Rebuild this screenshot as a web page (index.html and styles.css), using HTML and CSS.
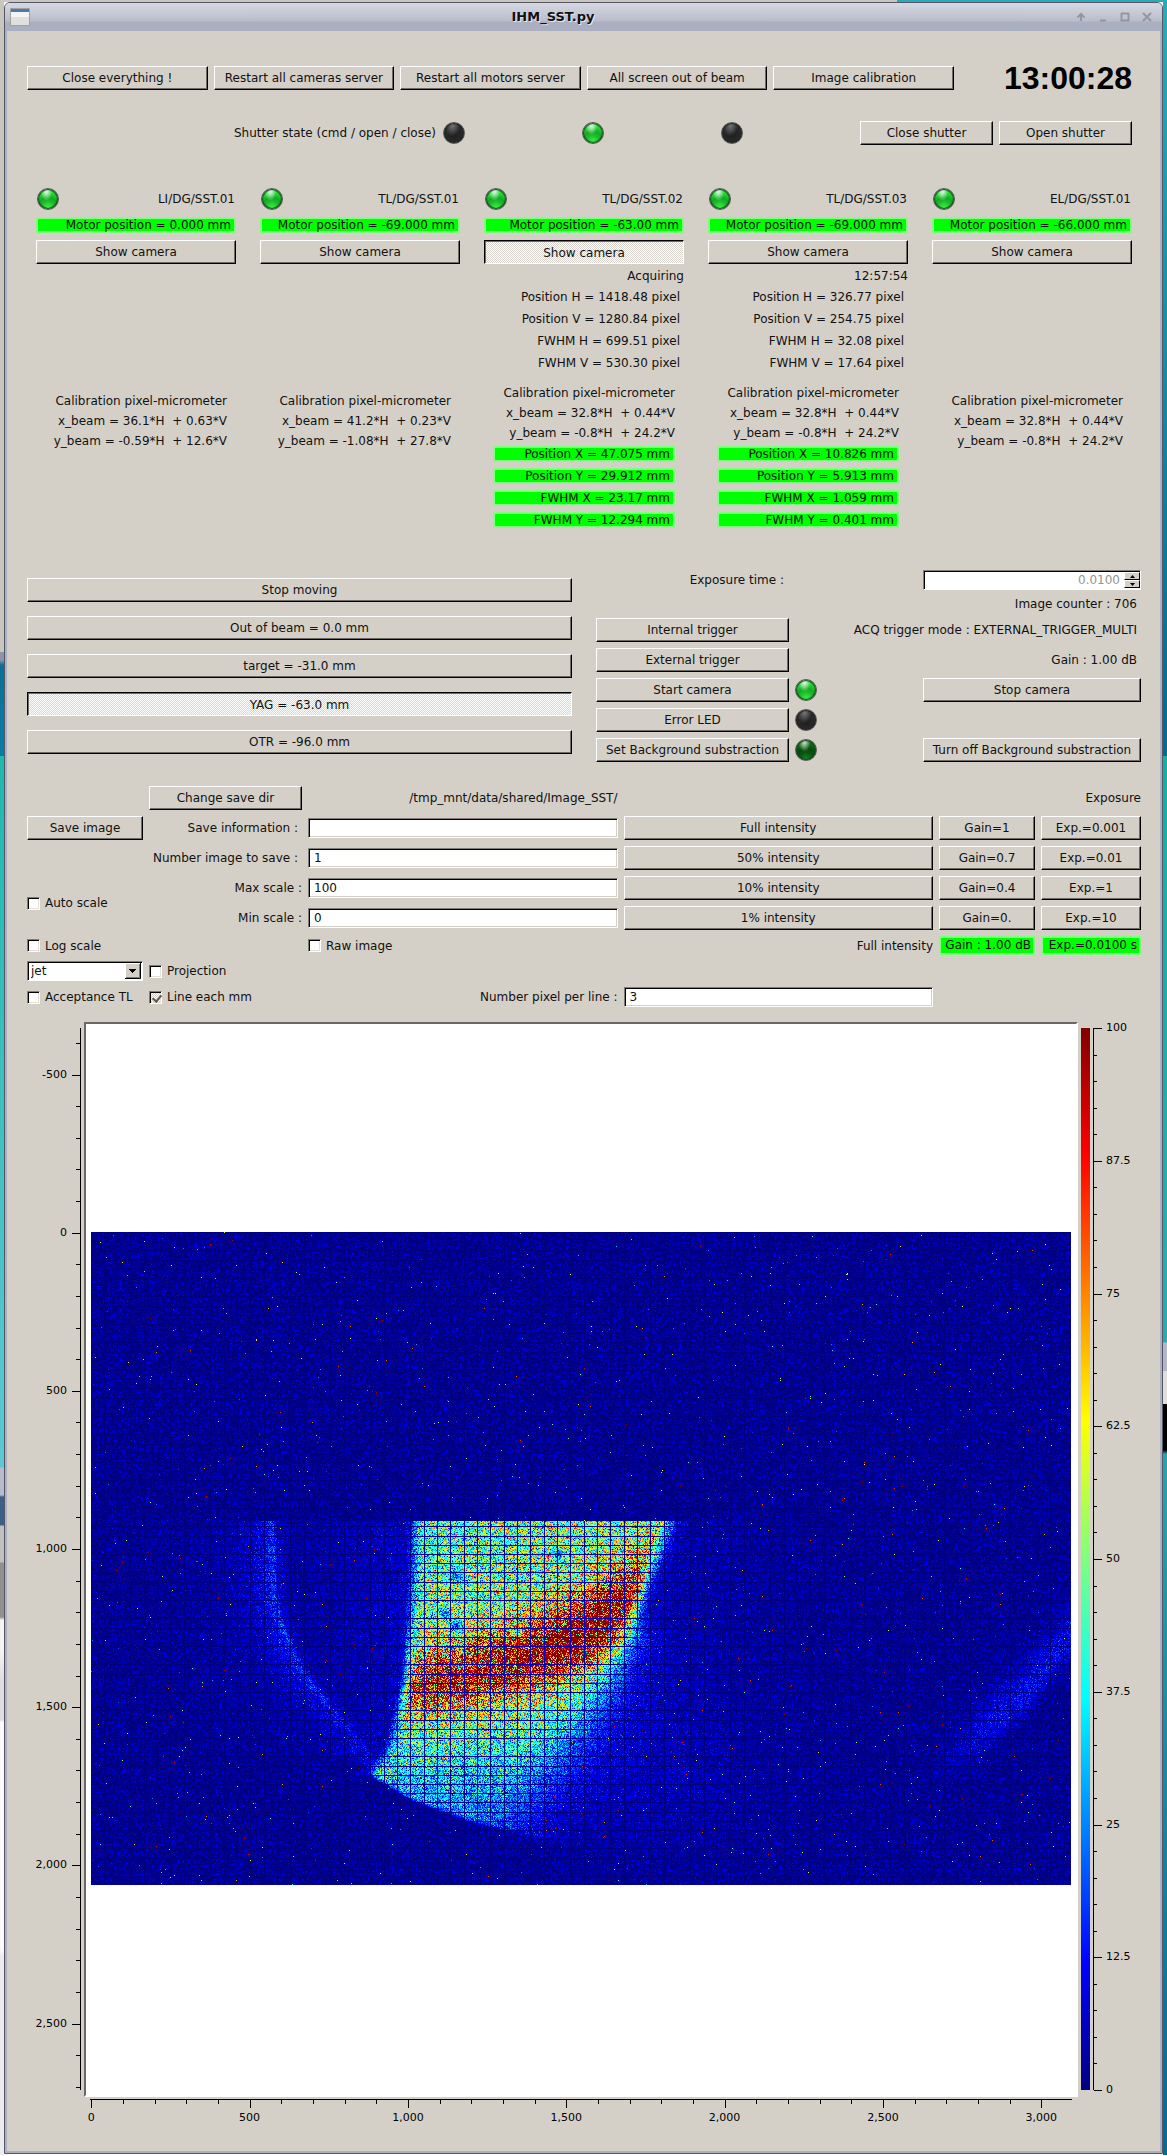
FILE: index.html
```
<!DOCTYPE html>
<html lang="en">
<head>
<meta charset="utf-8">
<title>IHM_SST.py</title>
<link rel="stylesheet" href="styles.css">
</head>
<body>
<div class="window">
  <header class="titlebar">
    <svg class="app-icon" width="20" height="18" viewBox="0 0 20 18" aria-hidden="true">
      <rect x=".5" y=".5" width="19" height="17" fill="#f4f4f2" stroke="#a3a39c"/>
      <rect x="1" y="1" width="18" height="3" fill="#4a78b0"/>
      <rect x="1" y="9" width="18" height="8" fill="#dfe0dc"/>
    </svg>
    <h1 class="title">IHM_SST.py</h1>
    <div class="window-tools">
      <button type="button" aria-label="Shade"><svg width="10" height="10" viewBox="0 0 10 10"><path d="M5 9V2M1.500 5.500L5 2l3.500 3.500" /></svg></button>
      <button type="button" aria-label="Minimize"><svg width="10" height="10" viewBox="0 0 10 10"><path d="M2 8.500h6"/></svg></button>
      <button type="button" aria-label="Maximize"><svg width="10" height="10" viewBox="0 0 10 10"><path d="M1.500 1v7.500h7V1" stroke-width="1"/><path d="M1 1.500h8"/></svg></button>
      <button type="button" aria-label="Close"><svg width="10" height="10" viewBox="0 0 10 10"><path d="M1 1l8 8M9 1L1 9"/></svg></button>
    </div>
  </header>

  <main class="content">
    <section class="top-bar">
      <button type="button" class="btn">Close everything !</button>
      <button type="button" class="btn">Restart all cameras server</button>
      <button type="button" class="btn">Restart all motors server</button>
      <button type="button" class="btn">All screen out of beam</button>
      <button type="button" class="btn">Image calibration</button>
      <time class="clock">13:00:28</time>
    </section>

    <section class="shutter">
      <span class="shutter-label">Shutter state (cmd / open / close)</span>
      <span class="leds"><i class="led off"></i><i class="led on"></i><i class="led off"></i></span>
      <button type="button" class="btn">Close shutter</button>
      <button type="button" class="btn">Open shutter</button>
    </section>

    <section class="cameras">
      <article class="camera">
        <div class="camera-head"><i class="led on"></i><span>LI/DG/SST.01</span></div>
        <output class="ok">Motor position = 0.000 mm</output>
        <button type="button" class="btn">Show camera</button>
        <div class="calibration idle"><p>Calibration pixel-micrometer</p><p>x_beam = 36.1*H&nbsp; + 0.63*V</p><p>y_beam = -0.59*H&nbsp; + 12.6*V</p></div>
      </article>
      <article class="camera">
        <div class="camera-head"><i class="led on"></i><span>TL/DG/SST.01</span></div>
        <output class="ok">Motor position = -69.000 mm</output>
        <button type="button" class="btn">Show camera</button>
        <div class="calibration idle"><p>Calibration pixel-micrometer</p><p>x_beam = 41.2*H&nbsp; + 0.23*V</p><p>y_beam = -1.08*H&nbsp; + 27.8*V</p></div>
      </article>
      <article class="camera">
        <div class="camera-head"><i class="led on"></i><span>TL/DG/SST.02</span></div>
        <output class="ok">Motor position = -63.00 mm</output>
        <button type="button" class="btn pressed" aria-pressed="true">Show camera</button>
        <p class="status">Acquiring</p>
        <div class="pixels"><p>Position H = 1418.48 pixel</p><p>Position V = 1280.84 pixel</p><p>FWHM H = 699.51 pixel</p><p>FWHM V = 530.30 pixel</p></div>
        <div class="calibration"><p>Calibration pixel-micrometer</p><p>x_beam = 32.8*H&nbsp; + 0.44*V</p><p>y_beam = -0.8*H&nbsp; + 24.2*V</p></div>
        <div class="results"><output class="ok">Position X = 47.075 mm</output><output class="ok">Position Y = 29.912 mm</output><output class="ok">FWHM X = 23.17 mm</output><output class="ok">FWHM Y = 12.294 mm</output></div>
      </article>
      <article class="camera">
        <div class="camera-head"><i class="led on"></i><span>TL/DG/SST.03</span></div>
        <output class="ok">Motor position = -69.000 mm</output>
        <button type="button" class="btn">Show camera</button>
        <p class="status">12:57:54</p>
        <div class="pixels"><p>Position H = 326.77 pixel</p><p>Position V = 254.75 pixel</p><p>FWHM H = 32.08 pixel</p><p>FWHM V = 17.64 pixel</p></div>
        <div class="calibration"><p>Calibration pixel-micrometer</p><p>x_beam = 32.8*H&nbsp; + 0.44*V</p><p>y_beam = -0.8*H&nbsp; + 24.2*V</p></div>
        <div class="results"><output class="ok">Position X = 10.826 mm</output><output class="ok">Position Y = 5.913 mm</output><output class="ok">FWHM X = 1.059 mm</output><output class="ok">FWHM Y = 0.401 mm</output></div>
      </article>
      <article class="camera">
        <div class="camera-head"><i class="led on"></i><span>EL/DG/SST.01</span></div>
        <output class="ok">Motor position = -66.000 mm</output>
        <button type="button" class="btn">Show camera</button>
        <div class="calibration idle"><p>Calibration pixel-micrometer</p><p>x_beam = 32.8*H&nbsp; + 0.44*V</p><p>y_beam = -0.8*H&nbsp; + 24.2*V</p></div>
      </article>
    </section>

    <section class="controls">
      <div class="positions">
        <button type="button" class="btn">Stop moving</button>
        <button type="button" class="btn">Out of beam = 0.0 mm</button>
        <button type="button" class="btn">target = -31.0 mm</button>
        <button type="button" class="btn pressed" aria-pressed="true">YAG = -63.0 mm</button>
        <button type="button" class="btn">OTR = -96.0 mm</button>
      </div>
      <div class="acquisition">
        <label class="exposure-label" for="exposure">Exposure time :</label>
        <div class="spin">
          <input id="exposure" type="text" inputmode="decimal" value="0.0100" disabled>
          <span class="spin-buttons">
            <button type="button" aria-label="Increase"><svg width="5" height="3" viewBox="0 0 5 3"><path d="M0 3L2.500 0 5 3z"/></svg></button>
            <button type="button" aria-label="Decrease"><svg width="5" height="3" viewBox="0 0 5 3"><path d="M0 0h5L2.500 3z"/></svg></button>
          </span>
        </div>
        <span class="reading counter">Image counter : 706</span>
        <button type="button" class="btn">Internal trigger</button>
        <span class="reading">ACQ trigger mode : EXTERNAL_TRIGGER_MULTI</span>
        <button type="button" class="btn">External trigger</button>
        <span class="reading">Gain : 1.00 dB</span>
        <button type="button" class="btn">Start camera</button>
        <i class="led on"></i>
        <button type="button" class="btn">Stop camera</button>
        <button type="button" class="btn first">Error LED</button>
        <i class="led off"></i>
        <button type="button" class="btn first tight">Set Background substraction</button>
        <i class="led dim"></i>
        <button type="button" class="btn tight">Turn off Background substraction</button>
      </div>
    </section>

    <section class="settings">
      <button type="button" class="btn c2 r1">Change save dir</button>
      <span class="c3 r1 path">/tmp_mnt/data/shared/Image_SST/</span>
      <span class="c6 r1 end">Exposure</span>

      <button type="button" class="btn c1 r2">Save image</button>
      <label class="c2 r2 name" for="info">Save information :</label>
      <input class="field c3 r2" id="info" type="text" value="">
      <button type="button" class="btn c4 r2">Full intensity</button>
      <button type="button" class="btn c5 r2">Gain=1</button>
      <button type="button" class="btn c6 r2">Exp.=0.001</button>

      <label class="c2 r3 name" for="count">Number image to save :</label>
      <input class="field c3 r3" id="count" type="text" value="1">
      <button type="button" class="btn c4 r3">50% intensity</button>
      <button type="button" class="btn c5 r3">Gain=0.7</button>
      <button type="button" class="btn c6 r3">Exp.=0.01</button>

      <label class="c2 r4 end" for="max">Max scale :</label>
      <input class="field c3 r4" id="max" type="text" value="100">
      <button type="button" class="btn c4 r4">10% intensity</button>
      <button type="button" class="btn c5 r4">Gain=0.4</button>
      <button type="button" class="btn c6 r4">Exp.=1</button>

      <label class="c2 r5 end" for="min">Min scale :</label>
      <input class="field c3 r5" id="min" type="text" value="0">
      <button type="button" class="btn c4 r5">1% intensity</button>
      <button type="button" class="btn c5 r5">Gain=0.</button>
      <button type="button" class="btn c6 r5">Exp.=10</button>

      <label class="check c1 auto"><input type="checkbox">Auto scale</label>

      <label class="check c1 r6"><input type="checkbox">Log scale</label>
      <label class="check c3 r6"><input type="checkbox">Raw image</label>
      <span class="c4 r6 end">Full intensity</span>
      <output class="ok c5 r6">Gain : 1.00 dB</output>
      <output class="ok c6 r6">Exp.=0.0100 s</output>

      <div class="combo c1 r7">
        <select aria-label="Colour map"><option>jet</option></select>
        <svg width="16" height="16" viewBox="0 0 16 16" aria-hidden="true"><path d="M0 0h16v16H0z" fill="#d4d0c8"/><path d="M.5 16V.5H16" stroke="#fff" fill="none"/><path d="M15.500 0v15.500H0" stroke="#000" fill="none"/><path d="M14.500 1v13.500H1" stroke="#807d78" fill="none"/><path d="M4 6h7v1h-1v1H9v1H8v1H7V9H6V8H5V7H4z"/></svg>
      </div>
      <label class="check c2 r7"><input type="checkbox">Projection</label>

      <label class="check c1 r8"><input type="checkbox">Acceptance TL</label>
      <label class="check c2 r8"><input type="checkbox" class="partial" checked>Line each mm</label>
      <label class="c3 r8 end" for="line">Number pixel per line :</label>
      <input class="field c4 r8" id="line" type="text" value="3">
    </section>

    <section class="plot">
      <div class="axis axis-y" id="axis-y"></div>
      <div class="canvas-frame"><canvas id="beam" width="980" height="653" role="img" aria-label="Beam image"></canvas></div>
      <div class="colorbar"></div>
      <div class="axis axis-c" id="axis-c"></div>
      <div class="axis axis-x" id="axis-x"></div>
    </section>
  </main>
</div>
<script src="plot.js"></script>
</body>
</html>
```
FILE: styles.css
```
* { box-sizing: border-box; }

body {
  margin: 0;
  padding: 2px 4px 1px;
  font: 12px/16px "DejaVu Sans", sans-serif;
  color: #111;
  background:
    linear-gradient(90deg, #cbc7c0 897px, #2aa9b8 897px) top / 100% 2px no-repeat,
    linear-gradient(#c9c6c0 0 652px, #8d93a8 652px 660px, #0a6f98 665px, #0a7ca4 756px, #1fb9ae 756px, #5cc8d3 1467px, #b8bacd 1468px 1495px, #3a6088 1497px 1525px, #c0c0c0 1526px 1562px, #909090 1563px 1617px, #f4f4f4 1620px 1650px, #dedee2 1680px 1720px, #fafafc 1722px 1950px, #ececf0 1956px) left / 4px 100% no-repeat,
    linear-gradient(#2aaab8 0, #0f7f9a 500px, #07688c 756px, #15b0a2 756px, #2ca9ae 1342px, #b4b6c6 1343px 1371px, #e0dedc 1371px 1404px, #000 1404px 1450px, #2ca0ac 1454px, #0a6890 100%) right / 4px 100% no-repeat;
}

p, h1 { margin: 0; font: inherit; }
i { font-style: normal; }
button, input, select { font: inherit; color: inherit; margin: 0; }

.window {
  background: #d4d0c8;
  border: 1px solid #555862;
  border-radius: 6px 6px 0 0;
  overflow: hidden;
}

.titlebar {
  display: flex;
  align-items: center;
  height: 28px;
  padding: 0 10px 0 5px;
  background: linear-gradient(#d6d8e2, #b9bccb 18px, #abafc2 19px);
}
.title { flex: 1; font-size: 13px; font-weight: bold; text-align: center; text-shadow: 1px 1px #e6e8f0; }
.window-tools { display: flex; gap: 12px; }
.window-tools button { display: flex; padding: 0; border: 0; background: none; }
.window-tools path { fill: none; stroke: #94969f; stroke-width: 2; }

.content {
  padding: 35px 19px 32px 20px;
  border: solid #abafc3;
  border-width: 0 2px 2px;
}

.btn {
  height: 24px;
  padding: 0 4px 1px;
  border: 1px solid;
  border-color: #fff #000 #000 #fff;
  border-radius: 0;
  background: #d4d0c8;
  box-shadow: inset -1px -1px #6e6b66;
  line-height: 16px;
  white-space: nowrap;
}
.btn.tight { padding: 0 0 1px; }
.btn.pressed {
  padding: 1px 4px 0;
  border-color: #000 #fff #fff #000;
  box-shadow: inset 1px 1px #6e6b66;
  background: repeating-conic-gradient(#fff 0 25%, #d9d5ce 0 50%) 0 0 / 2px 2px;
}

.led {
  display: block;
  width: 22px;
  height: 22px;
  border-radius: 50%;
  border: 1px solid #565b56;
  box-shadow: inset 0 0 1px 1px #1c4420;
}
.led.on { background: radial-gradient(ellipse at 42% 10%, #eaffea, transparent 38%), radial-gradient(circle at 50% 95%, #3cf84c, #1cc02a 30%, #16a824 48%, #20e034 75%); }
.led.dim { background: radial-gradient(ellipse at 42% 10%, #cfe8cf, transparent 38%), radial-gradient(circle at 50% 95%, #168a22, #0a5512 30%, #064a0c 50%, #0a7016 75%); }
.led.off { background: radial-gradient(ellipse at 42% 10%, #77787a, transparent 45%), radial-gradient(circle at 50% 55%, #1c1c1c, #303032 80%); box-shadow: inset 0 0 1px 1px #222; }

.ok {
  display: block;
  height: 16px;
  padding: 0 3px;
  border: 2px solid #80ff80;
  background: #0f0;
  line-height: 12px;
  text-align: right;
  white-space: nowrap;
}

.top-bar, .shutter, .cameras { padding-right: 9px; }

.top-bar {
  display: grid;
  grid-template-columns: repeat(5, 1fr) 172px;
  gap: 6px;
  height: 24px;
}
.clock {
  font: bold 32px/24px "Liberation Sans", sans-serif;
  color: #000;
  text-align: right;
}

.shutter {
  display: grid;
  grid-template-columns: 409px 1fr 133px 133px;
  align-items: center;
  gap: 6px;
  margin-top: 31px;
}
.shutter-label { text-align: right; }
.leds { display: flex; justify-content: space-between; padding: 0 111px 0 1px; }

.cameras {
  display: grid;
  grid-template-columns: repeat(5, 1fr);
  gap: 24px;
  min-height: 382px;
  margin-top: 43px;
  padding-left: 9px;
  text-align: right;
}
.camera { display: flex; flex-direction: column; }
.camera-head { display: flex; justify-content: space-between; align-items: center; padding: 0 1px; }
.camera > .ok { margin: 7px 0; }
.status { margin-top: 4px; }
.pixels { margin-top: 2px; padding-right: 4px; line-height: 22px; }
.calibration { margin-top: 9px; padding-right: 9px; line-height: 20px; }
.calibration.idle { margin-top: 127px; }
.results { display: grid; gap: 6px; margin: 3px 9px 0; }

.controls {
  display: grid;
  grid-template-columns: 545px 1fr;
  gap: 24px;
}
.positions { display: grid; align-content: start; gap: 14px; padding-top: 8px; }
.acquisition {
  display: grid;
  grid-template-columns: 193px 22px 1fr 218px;
  grid-template-rows: 20px 16px;
  align-content: start;
  align-items: center;
  gap: 6px;
}
.acquisition .btn { grid-column: 1; }
.acquisition .led { grid-column: 2; }
.acquisition .led + .btn:not(.first) { grid-column: 4; }
.exposure-label { text-align: right; padding-right: 5px; }
.reading { grid-column: 2 / 5; text-align: right; padding-right: 4px; }
.spin {
  grid-column: 4;
  display: flex;
  height: 20px;
  border: 1px solid;
  border-color: #807d78 #fff #fff #807d78;
  background: #fff;
  box-shadow: inset 1px 1px #000;
}
.spin input {
  flex: 1;
  min-width: 0;
  padding: 0 4px;
  border: 0;
  background: none;
  color: #96948f;
  text-align: right;
}
.spin-buttons { display: grid; grid-template-rows: 1fr 1fr; width: 16px; padding: 1px 0; }
.spin-buttons button {
  display: flex;
  align-items: center;
  justify-content: center;
  padding: 0;
  border: 1px solid;
  border-color: #fff #000 #000 #fff;
  background: #d4d0c8;
}

.settings {
  display: grid;
  grid-template-columns: 116px 153px 1fr 1fr 96px 100px;
  grid-template-rows: repeat(5, 24px) 19px 20px 20px;
  align-items: center;
  gap: 6px;
  margin-top: 24px;
  white-space: nowrap;
}
.c1 { grid-column: 1; } .c2 { grid-column: 2; } .c3 { grid-column: 3; }
.c4 { grid-column: 4; } .c5 { grid-column: 5; } .c6 { grid-column: 6; }
.r1 { grid-row: 1; } .r2 { grid-row: 2; } .r3 { grid-row: 3; } .r4 { grid-row: 4; }
.r5 { grid-row: 5; } .r6 { grid-row: 6; } .r7 { grid-row: 7; } .r8 { grid-row: 8; }
.auto { grid-row: 4 / 6; }
.end, .path { text-align: right; }
.name { text-align: right; padding-right: 4px; }
.settings .ok { height: 19px; line-height: 15px; padding: 0 2px; }

.field {
  width: 100%;
  height: 20px;
  padding: 0 5px;
  border: 1px solid;
  border-color: #807d78 #fff #fff #807d78;
  border-radius: 0;
  background: #fff;
  box-shadow: inset 1px 1px #000, inset -1px -1px #d4d0c8;
}

.check { display: flex; align-items: center; gap: 5px; }
.check input {
  appearance: none;
  width: 13px;
  height: 13px;
  border: 1px solid;
  border-color: #807d78 #fff #fff #807d78;
  background: #fff;
  box-shadow: inset 1px 1px #000, inset -1px -1px #e3e0da;
}
.check .partial { background: repeating-conic-gradient(#fff 0 25%, #d4d0c8 0 50%) 0 0 / 2px 2px; }
.check .partial::before {
  content: "";
  display: block;
  width: 4px;
  height: 7px;
  margin: 1px 0 0 4px;
  border: solid #5c5a56;
  border-width: 0 2px 2px 0;
  transform: rotate(40deg);
}

.combo {
  display: flex;
  height: 20px;
  padding: 1px;
  border: 1px solid;
  border-color: #807d78 #fff #fff #807d78;
  background: #fff;
  box-shadow: inset 1px 1px #000;
}
.combo select {
  appearance: none;
  flex: 1;
  min-width: 0;
  padding: 0 2px;
  border: 0;
  background: none;
}

.plot {
  display: grid;
  grid-template-columns: 54px 1fr 9px 48px;
  grid-template-rows: auto 20px;
  column-gap: 3px;
  row-gap: 2px;
  margin-top: 15px;
}
.canvas-frame {
  display: flex;
  align-items: center;
  padding: 208px 5px 210px;
  border: 2px solid;
  border-color: #6b6965 #fff #fff #6b6965;
  background: #fff;
}
.canvas-frame canvas { display: block; width: 100%; image-rendering: pixelated; }
.colorbar {
  margin: 6px 0 7px;
  background: linear-gradient(#800000, #f00 12%, #ff0 37%, #0ff 63%, #00f 88%, #000080);
}

.axis { position: relative; font-size: 11px; line-height: 14px; color: #000; }
.axis-y, .axis-c { margin: 6px 0 7px; }
.axis-y { border-right: 1px solid; }
.axis-c { border-left: 1px solid; }
.axis-x { grid-column: 2; margin: 0 6px; border-top: 1px solid; }
.tick { position: absolute; background: #000; }
.tick-label { position: absolute; white-space: nowrap; }
.axis-y .tick { right: 0; width: 4px; height: 1px; }
.axis-y .tick.major { width: 8px; }
.axis-y .tick-label { right: 13px; transform: translateY(-50%); }
.axis-c .tick { left: 0; width: 3px; height: 1px; }
.axis-c .tick.major { width: 8px; }
.axis-c .tick-label { left: 12px; transform: translateY(-50%); }
.axis-x .tick { top: 0; width: 1px; height: 4px; }
.axis-x .tick.major { height: 8px; }
.axis-x .tick-label { top: 11px; transform: translateX(-50%); }
```
FILE: plot.js
```
// Axis scales: every step gets a tick, every major step a label.
function buildAxis(id, side, from, to, first, step, majorStep) {
  const axis = document.getElementById(id);
  const last = Math.max(from, to);
  for (let v = first; v <= last; v += step) {
    const at = (100 * (v - from) / (to - from)) + '%';
    const major = Math.abs(v / majorStep - Math.round(v / majorStep)) < 1e-6;
    const tick = document.createElement('span');
    tick.className = major ? 'tick major' : 'tick';
    tick.style[side] = at;
    axis.append(tick);
    if (major) {
      const label = document.createElement('span');
      label.className = 'tick-label';
      label.style[side] = at;
      label.textContent = v.toLocaleString('en-US');
      axis.append(label);
    }
  }
}
buildAxis('axis-y', 'top', -647, 2710, -600, 100, 500);
buildAxis('axis-x', 'left', -4, 3097, 0, 100, 500);
buildAxis('axis-c', 'top', 100, 0, 0, 2.5, 12.5);

// Beam image, jet colour map over 0..100.
const canvas = document.getElementById('beam');
const ctx = canvas.getContext('2d');
const W = canvas.width, H = canvas.height;
const image = ctx.createImageData(W, H);

let seed = 20177;
function random() {
  seed = (seed + 0x6D2B79F5) | 0;
  let t = Math.imul(seed ^ (seed >>> 15), 1 | seed);
  t = (t + Math.imul(t ^ (t >>> 7), 61 | t)) ^ t;
  return ((t ^ (t >>> 14)) >>> 0) / 4294967296;
}
const noise = () => (random() + random() + random() - 1.5) * 2;
const clamp = (v, a, b) => Math.min(b, Math.max(a, v));
const smooth = (v) => { const t = clamp(v, 0, 1); return t * t * (3 - 2 * t); };

function curve(points, v) {
  if (v <= points[0][0]) return points[0][1];
  for (let i = 1; i < points.length; i++) {
    const [a, p] = points[i - 1], [b, q] = points[i];
    if (v <= b) return p + (q - p) * (v - a) / (b - a);
  }
  return points[points.length - 1][1];
}

// Outlines, in thirds of a pixel from the beam corner.
const left = [[120, 592], [300, 592], [420, 582], [600, 572], [700, 548], [800, 520], [880, 465], [950, 440]];
const right = [[120, 1310], [230, 1275], [300, 1250], [400, 1215], [480, 1175], [600, 1070], [700, 990], [800, 900], [900, 830], [1000, 780], [1100, 740]];
const soft = [[120, 45], [300, 35], [400, 38], [500, 90], [650, 140], [900, 190]];
const rim = [[380, 835], [460, 888], [580, 960], [740, 1018], [900, 1060], [1050, 1100], [1300, 1150]];
const ridge = [[560, 610], [700, 585], [850, 545], [1000, 500], [1100, 450], [1180, 390], [1250, 310], [1350, 240]];
const peak = [[560, 38], [700, 46], [900, 52], [1100, 66], [1180, 58], [1240, 34], [1300, 8]];
const halo = [[120, 160], [350, 168], [420, 185], [500, 215], [580, 255], [660, 315], [740, 380], [860, 460], [900, 490]];
const arc = [[2100, 900], [2184, 845], [2340, 715], [2430, 630], [2553, 468], [2620, 380]];
const spots = [[705, 285, 16], [675, 400, 16], [708, 436, 24], [1015, 220, 16], [890, 455, 12]];

function signal(x, y) {
  if (y < 122) return 0;
  let v = 0;
  const h = curve(halo, y);
  if (y < 900) {
    const d = x - h;
    const fade = 1 - smooth((y - 450) / 500);
    v += d > 0 ? 9 * Math.exp(-d / 16) : 10 * Math.exp(d / 45) * (0.4 + 0.6 * fade) + 4 * Math.exp(d / 150) * fade;
  }
  if (x > 2080 && y > 330) {
    const d = (y - curve(arc, x)) * 0.7;
    v += 9 * Math.exp(-Math.pow(d / (d < 0 ? 70 : 40), 2)) * smooth((x - 2080) / 300);
  }

  const below = smooth((curve(rim, x) - y) / 20 + 0.5);
  const l = curve(left, y), r = curve(right, y), s = curve(soft, y);
  const inside = smooth((x - l + 40) / 62) * (x < r ? 1 : Math.exp(-Math.pow((x - r) / s, 2)));
  const d = y - curve(ridge, x);
  let body = d < 0 ? 35 + 8 * smooth((x - 800) / 350) + 6 * smooth((y - 150) / 300) : 46 * Math.exp(-Math.pow(d / 480, 1.4));
  body += curve(peak, x) * Math.exp(-Math.pow(d / (d < 0 ? 105 : 105), 2));
  for (const [sx, sy, sr] of spots) {
    body *= 1 - 0.75 * Math.exp(-((x - sx) ** 2 + (y - sy) ** 2) / (sr * sr));
  }
  v += body * inside * below;
  v += 7 * below * Math.exp(-Math.pow((x - 900) / 480, 2)) * smooth((1150 - y) / 500);
  v += 2 * Math.exp(-Math.pow((x - 1250) / 400, 2) - Math.pow((y - 950) / 250, 2));
  return v;
}

const column = new Uint8Array(W), row = new Uint8Array(H);
for (let k = -24; k < 50; k++) { const x = Math.round(319.3 + 13.33 * k); if (x >= 0 && x < W) column[x] = 1; }
for (let k = -32; k < 40; k++) {
  const y = Math.round(294.3 + 9.2 * k);
  if (y >= 0 && y < H && ![9, 14, 19, 24].includes(k)) row[y] = 1;
}

for (let y = 0; y < H; y++) {
  for (let x = 0; x < W; x++) {
    const s = signal((x - 129) * 3, (y - 248) * 3);
    let v = s + noise() * (0.25 * s + 0.9 * Math.sqrt(s)) + Math.max(0, noise() * 5);
    if (column[x] || row[y]) v *= 0.06;
    if (random() < 0.0024) v = 15 + random() * 85;
    const t = clamp(v / 100, 0, 1) * 4;
    const i = (y * W + x) * 4;
    image.data[i] = 255 * clamp(Math.min(t - 1.5, 4.5 - t), 0, 1);
    image.data[i + 1] = 255 * clamp(Math.min(t - 0.5, 3.5 - t), 0, 1);
    image.data[i + 2] = 255 * clamp(Math.min(t + 0.5, 2.5 - t), 0, 1);
    image.data[i + 3] = 255;
  }
}
ctx.putImageData(image, 0, 0);
```
